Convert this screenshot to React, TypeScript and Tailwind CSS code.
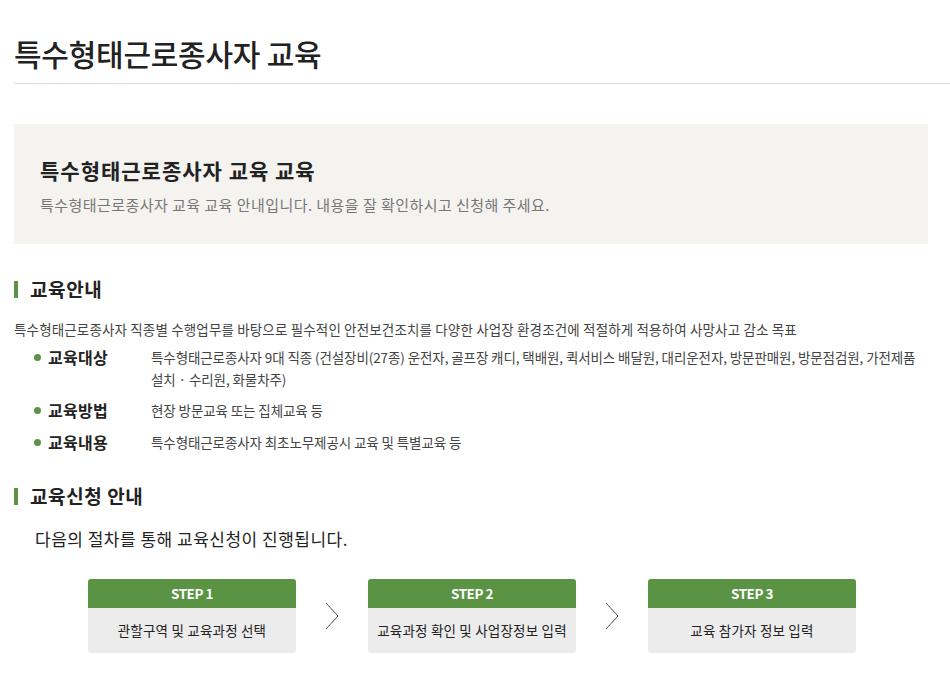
export default function App() {
  const rows = [
    {
      label: "교육대상",
      text: "특수형태근로종사자 9대 직종 (건설장비(27종) 운전자, 골프장 캐디, 택배원, 퀵서비스 배달원, 대리운전자, 방문판매원, 방문점검원, 가전제품 설치 · 수리원, 화물차주)",
    },
    { label: "교육방법", text: "현장 방문교육 또는 집체교육 등" },
    { label: "교육내용", text: "특수형태근로종사자 최초노무제공시 교육 및 특별교육 등" },
  ]

  const steps = [
    { step: "STEP 1", text: "관할구역 및 교육과정 선택" },
    { step: "STEP 2", text: "교육과정 확인 및 사업장정보 입력" },
    { step: "STEP 3", text: "교육 참가자 정보 입력" },
  ]

  return (
    <div className="min-h-screen bg-white text-[#333] font-['Noto_Sans_CJK_KR','Noto_Sans',sans-serif]">
      <div className="pl-[14px] pt-[33px]">
        <h1 className="text-[30px] font-medium leading-[40px] text-[#222] tracking-[-0.25px] pb-[10px] border-b border-[#dcdcdc]">
          특수형태근로종사자 교육
        </h1>

        <div className="mt-[40px] w-[914px] h-[120px] bg-[#f4f3f0] px-[26px] pt-[32px]">
          <h2 className="text-[21px] font-bold leading-[28px] text-[#222] tracking-[1px]">
            특수형태근로종사자 교육 교육
          </h2>
          <p className="mt-[10px] text-[15px] leading-[22px] text-[#777] tracking-[0.45px]">
            특수형태근로종사자 교육 교육 안내입니다. 내용을 잘 확인하시고 신청해 주세요.
          </p>
        </div>

        <div className="mt-[32px] flex items-center">
          <span className="w-[4px] h-[17px] bg-[#5b9344]" />
          <h3 className="ml-[12px] text-[19px] font-bold leading-[26px] text-[#222] tracking-[0.6px]">교육안내</h3>
        </div>
        <p className="mt-[17px] text-[13.5px] leading-[20px] text-[#444] tracking-[0.15px]">
          특수형태근로종사자 직종별 수행업무를 바탕으로 필수적인 안전보건조치를 다양한 사업장 환경조건에 적절하게 적용하여 사망사고 감소 목표
        </p>
        <div className="mt-[6px] pl-[20px] pr-[10px] flex flex-col gap-[8px]">
          {rows.map((r) => (
            <div key={r.label} className="flex">
              <div className="w-[117px] shrink-0 flex items-start">
                <span className="mt-[9px] w-[7px] h-[7px] rounded-full bg-[#5b9344]" />
                <span className="ml-[7px] text-[16px] font-bold leading-[24px] text-[#222] tracking-[0.3px]">{r.label}</span>
              </div>
              <p className="pt-[1px] text-[13.5px] leading-[22px] text-[#444] tracking-[-0.1px] break-keep">{r.text}</p>
            </div>
          ))}
        </div>

        <div className="mt-[29px] flex items-center">
          <span className="w-[4px] h-[17px] bg-[#5b9344]" />
          <h3 className="ml-[12px] text-[19px] font-bold leading-[26px] text-[#222] tracking-[0.6px]">교육신청 안내</h3>
        </div>
        <p className="mt-[18px] pl-[21px] text-[17px] leading-[24px] text-[#222] tracking-[0.5px]">
          다음의 절차를 통해 교육신청이 진행됩니다.
        </p>

        <div className="mt-[28px] pl-[74px] flex items-center">
          {steps.map((s, i) => (
            <div key={s.step} className="flex items-center">
              {i > 0 && (
                <div className="w-[72px] flex justify-center">
                  <svg width="14" height="28" viewBox="0 0 14 28" fill="none">
                    <path d="M1 1 L13 14 L1 27" stroke="#555" strokeWidth="1" />
                  </svg>
                </div>
              )}
              <div className="w-[208px] rounded-[3px] overflow-hidden">
                <div className="h-[29px] bg-[#5b9344] text-white text-[13.5px] font-bold flex items-center justify-center tracking-[-0.5px]">
                  {s.step}
                </div>
                <div className="h-[45px] bg-[#ececec] text-[13.5px] text-[#222] flex items-center justify-center tracking-[0.2px]">
                  {s.text}
                </div>
              </div>
            </div>
          ))}
        </div>
      </div>
    </div>
  )
}
